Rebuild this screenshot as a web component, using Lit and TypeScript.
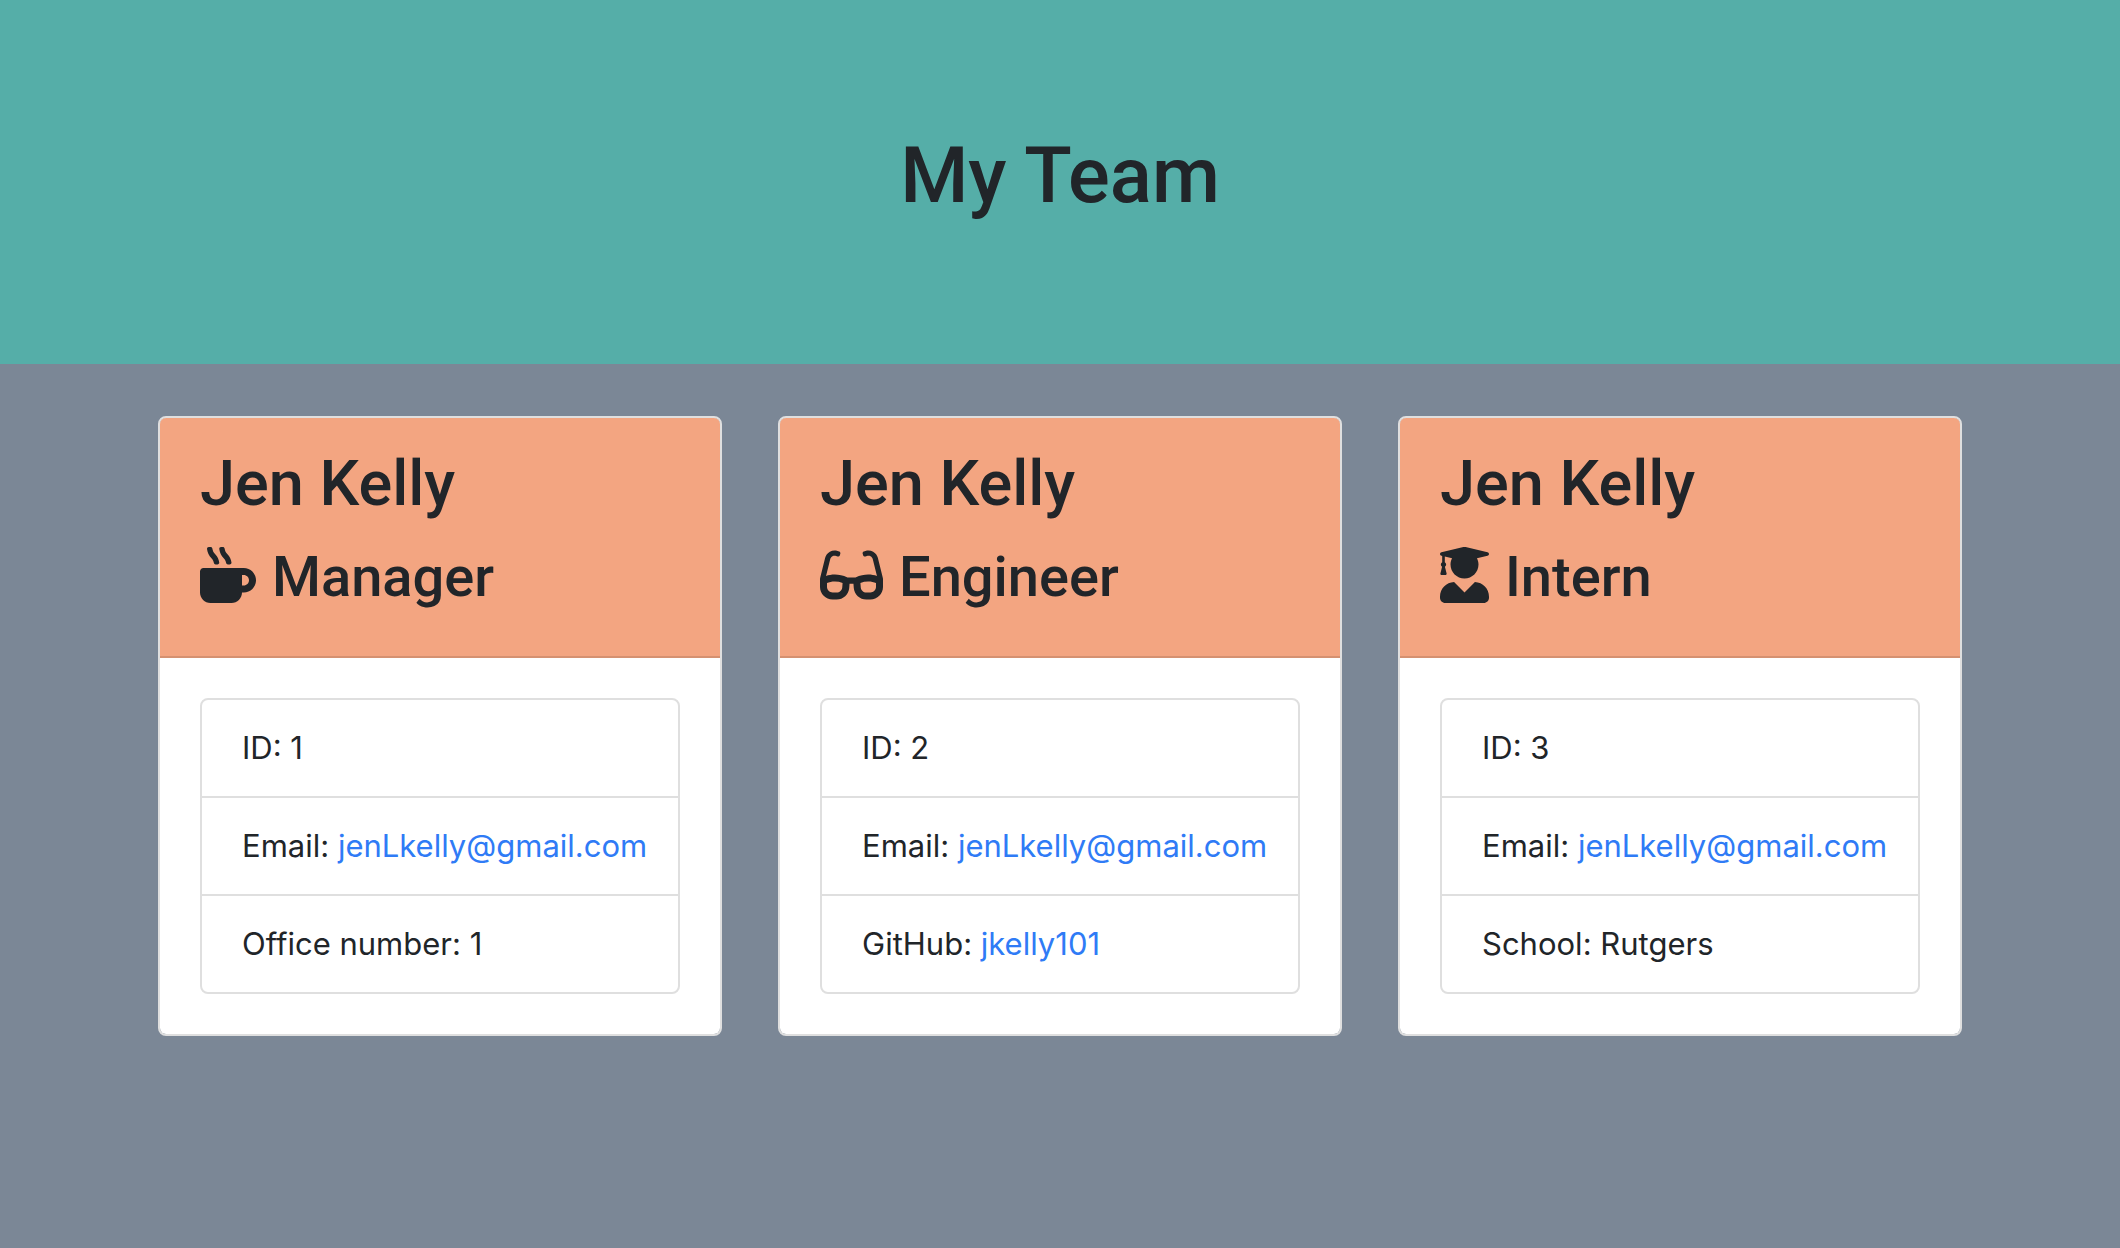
import { LitElement, html, css, svg } from "lit";
import { customElement, property } from "lit/decorators.js";

type IconName = "mug" | "glasses" | "graduate";

interface Detail {
  label: string;
  value: string;
  href?: string;
}

interface Member {
  name: string;
  role: string;
  icon: IconName;
  details: Detail[];
}

const ICONS: Record<IconName, { width: number; path: string }> = {
  mug: {
    width: 512,
    path: "M127.1 146.5c1.3 7.7 8 13.5 16 13.5h16.5c9.8 0 17.6-8.5 16.3-18-3.8-28.2-16.4-54.2-36.6-74.7-14.4-14.7-23.6-33.3-26.4-53.5C111.8 5.9 105 0 96.8 0H80.4C70.6 0 63 8.5 64.1 18c3.9 31.9 18 61.3 40.6 84.4 12 12.2 19.7 27.5 22.4 44.1zm112 0c1.3 7.7 8 13.5 16 13.5h16.5c9.8 0 17.6-8.5 16.3-18-3.8-28.2-16.4-54.2-36.6-74.7-14.4-14.7-23.6-33.3-26.4-53.5C223.8 5.9 217 0 208.8 0h-16.4c-9.8 0-17.5 8.5-16.3 18 3.9 31.9 18 61.3 40.6 84.4 12 12.2 19.7 27.5 22.4 44.1zM400 192H32c-17.7 0-32 14.3-32 32v192c0 53 43 96 96 96h192c53 0 96-43 96-96h16c61.8 0 112-50.2 112-112s-50.2-112-112-112zm0 160h-16v-96h16c26.5 0 48 21.5 48 48s-21.5 48-48 48z",
  },
  glasses: {
    width: 576,
    path: "M574.1 280.37L528.75 98.66c-5.91-23.7-21.59-44.05-43-55.81-21.44-11.73-46.97-14.11-70.19-6.33l-15.25 5.08c-8.39 2.79-12.92 11.86-10.12 20.24l5.06 15.18c2.79 8.38 11.85 12.91 20.23 10.12l13.18-4.39c10.87-3.62 23-3.57 33.16 1.73 10.29 5.37 17.57 14.56 20.37 25.82l38.46 153.82c-22.19-6.81-49.79-12.46-81.2-12.46-34.77 0-73.98 7.02-114.85 26.74h-73.18c-40.87-19.74-80.08-26.75-114.86-26.75-31.42 0-59.02 5.65-81.21 12.46l38.46-153.83c2.79-11.25 10.09-20.45 20.38-25.81 10.16-5.3 22.28-5.35 33.15-1.73l13.17 4.39c8.38 2.79 17.44-1.74 20.23-10.12l5.06-15.18c2.8-8.38-1.73-17.45-10.12-20.24l-15.25-5.08c-23.22-7.78-48.75-5.41-70.19 6.33-21.41 11.77-37.09 32.11-43 55.8L1.9 280.37A64.218 64.218 0 0 0 0 295.86v70.25C0 429.01 51.58 480 115.2 480h37.12c60.28 0 110.37-45.94 114.88-105.37l2.93-38.63h35.75l2.93 38.63C313.31 434.06 363.4 480 423.68 480h37.12c63.62 0 115.2-50.99 115.2-113.88v-70.25c0-5.23-.64-10.43-1.9-15.5zm-370.72 89.42c-1.97 25.91-24.4 46.21-51.06 46.21H115.2C86.97 416 64 393.62 64 366.11v-37.54c18.12-6.49 43.42-12.92 72.58-12.92 23.86 0 47.26 4.33 69.93 12.92l-3.13 41.22zM512 366.12c0 27.51-22.97 49.88-51.2 49.88h-37.12c-26.67 0-49.1-20.3-51.06-46.21l-3.13-41.22c22.67-8.59 46.08-12.92 69.95-12.92 29.12 0 54.43 6.44 72.55 12.93v37.54z",
  },
  graduate: {
    width: 448,
    path: "M319.4 320.6L224 416l-95.4-95.4C57.1 323.7 0 382.2 0 454.4v9.6c0 26.5 21.5 48 48 48h352c26.5 0 48-21.5 48-48v-9.6c0-72.2-57.1-130.7-128.6-133.8zM13.6 79.8l6.4 1.5v58.4c-7 4.2-12 11.5-12 20.3 0 8.4 4.6 15.4 11.1 19.7L3.5 242c-1.7 6.9 2.1 14 7.6 14h41.8c5.5 0 9.3-7.1 7.6-14l-15.6-62.3C51.4 175.4 56 168.4 56 160c0-8.8-5-16.1-12-20.3V87.1l66 15.9c-8.6 17.2-14 36.4-14 57 0 70.7 57.3 128 128 128s128-57.3 128-128c0-20.6-5.3-39.8-14-57l96.3-23.2c18.2-4.4 18.2-27.1 0-31.5l-190.4-46c-13-3.1-26.7-3.1-39.7 0L13.6 48.2c-18.1 4.4-18.1 27.2 0 31.6z",
  },
};

const EMAIL: Detail = {
  label: "Email",
  value: "jenLkelly@gmail.com",
  href: "mailto:jenLkelly@gmail.com",
};

const TEAM: Member[] = [
  {
    name: "Jen Kelly",
    role: "Manager",
    icon: "mug",
    details: [{ label: "ID", value: "1" }, EMAIL, { label: "Office number", value: "1" }],
  },
  {
    name: "Jen Kelly",
    role: "Engineer",
    icon: "glasses",
    details: [
      { label: "ID", value: "2" },
      EMAIL,
      { label: "GitHub", value: "jkelly101", href: "https://github.com/jkelly101" },
    ],
  },
  {
    name: "Jen Kelly",
    role: "Intern",
    icon: "graduate",
    details: [{ label: "ID", value: "3" }, EMAIL, { label: "School", value: "Rutgers" }],
  },
];

@customElement("member-card")
export class MemberCard extends LitElement {
  @property({ attribute: false }) member!: Member;

  static styles = css`
    :host {
      display: block;
      box-sizing: border-box;
      overflow: hidden;
      background: #fff;
      background-clip: padding-box;
      border: 2px solid #dfdfdf;
      border-radius: 8px;
    }
    .header {
      padding: 26px 40px 44px;
      background: #f3a581;
      border-bottom: 2px solid #d59171;
    }
    .name,
    .role {
      margin: 0;
      font-family: Roboto, "Liberation Sans", sans-serif;
      font-weight: 500;
    }
    .name {
      margin-bottom: 18px;
      font-size: 63px;
      line-height: 80px;
    }
    .role {
      display: flex;
      align-items: center;
      gap: 16px;
      font-size: 56px;
      line-height: 70px;
    }
    .icon {
      display: block;
      flex: none;
      height: 56px;
      margin-bottom: 4px;
      fill: currentColor;
    }
    .body {
      padding: 40px;
    }
    .details {
      margin: 0;
      padding: 0;
      list-style: none;
      border: 2px solid #dfdfdf;
      border-radius: 8px;
    }
    .detail {
      padding: 24px 40px;
      font-size: 31px;
      line-height: 48px;
      white-space: nowrap;
    }
    .detail + .detail {
      border-top: 2px solid #dfdfdf;
    }
    .link {
      color: #2f7bf6;
      text-decoration: none;
    }
    .link:hover {
      text-decoration: underline;
    }
  `;

  render() {
    const { name, role, icon, details } = this.member;
    const { width, path } = ICONS[icon];
    return html`
      <div class="header">
        <h2 class="name">${name}</h2>
        <h3 class="role">
          <svg class="icon" viewBox="0 0 ${width} 512" aria-hidden="true">
            ${svg`<path d=${path}></path>`}
          </svg>
          <span>${role}</span>
        </h3>
      </div>
      <div class="body">
        <ul class="details">
          ${details.map(
            (d) => html`<li class="detail">
              ${d.label}:
              ${d.href ? html`<a class="link" href=${d.href}>${d.value}</a>` : d.value}
            </li>`
          )}
        </ul>
      </div>
    `;
  }
}

@customElement("app-root")
export class AppRoot extends LitElement {
  static styles = css`
    :host {
      display: block;
      box-sizing: border-box;
      min-height: 100vh;
      background: #7b8796;
      color: #212529;
      font-family: Inter, "Liberation Sans", sans-serif;
    }
    .banner {
      padding: 128px 32px 140px;
      background: #55aea8;
      text-align: center;
    }
    .title {
      margin: 0;
      font-family: Roboto, "Liberation Sans", sans-serif;
      font-size: 78px;
      font-weight: 500;
      line-height: 96px;
    }
    .team {
      display: grid;
      grid-template-columns: repeat(auto-fit, minmax(500px, 1fr));
      align-items: start;
      gap: 56px;
      max-width: 1804px;
      margin: 0 auto;
      padding: 52px 0;
    }
  `;

  render() {
    return html`
      <header class="banner">
        <h1 class="title">My Team</h1>
      </header>
      <main class="team">
        ${TEAM.map((m) => html`<member-card .member=${m}></member-card>`)}
      </main>
    `;
  }
}
